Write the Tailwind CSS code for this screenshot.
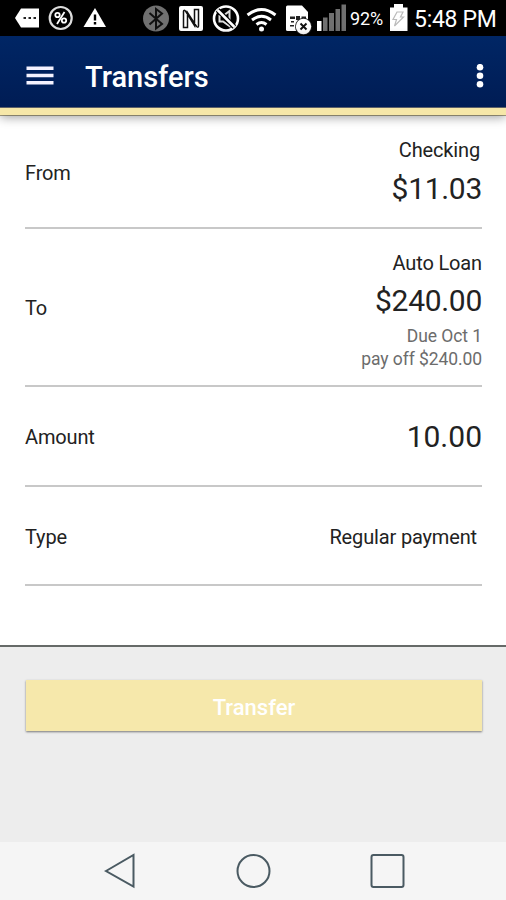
<!DOCTYPE html>
<html lang="en">
<head>
<meta charset="utf-8">
<title>Transfers</title>
<script src="https://cdn.jsdelivr.net/npm/@tailwindcss/browser@4"></script>
</head>
<body class="flex h-[900px] w-[506px] flex-col overflow-hidden bg-white font-['Roboto',sans-serif] text-[#222]">
  <!-- Status bar -->
  <div class="flex h-9 shrink-0 items-center bg-black text-white">
    <svg class="h-9 w-[348px] shrink-0" viewBox="0 0 348 36" fill="none">
      <path d="M15 18 21 8.500H39V27.500H21Z" fill="#fff"/>
      <path d="M23.500 17h2.500v2h-2.500zM28.500 17H31v2h-2.500zM33.500 17H36v2h-2.500z" fill="#222"/>
      <circle cx="60.700" cy="18" r="11" stroke="#ddd" stroke-width="2.200"/>
      <g stroke="#fff" stroke-width="1.800"><circle cx="57.500" cy="15" r="2.200"/><circle cx="64" cy="20.500" r="2.200"/><path d="M64.500 12 57 24"/></g>
      <path d="M95 8 106 27H83.500Z" fill="#fff"/>
      <path d="M95 14.500v6M95 22v2.500" stroke="#000" stroke-width="2.400"/>
      <circle cx="156" cy="18.500" r="13" fill="#707070"/>
      <path d="M149.500 13 162 24 156 28.500V9L162 13.500 149.500 24.500" stroke="#101010" stroke-width="2"/>
      <rect x="179" y="6" width="24" height="25" rx="2" fill="#fff"/>
      <path d="M187.500 27.500H183.500V11.500Q183.500 9.500 185.500 11L194.500 25.500V9.500H198.500V26Q198.500 28 196.500 26.500L187.500 12.500Z" stroke="#111" stroke-width="1.500"/>
      <circle cx="226" cy="18.500" r="12" stroke="#fff" stroke-width="2.600"/>
      <path d="M219.500 16H223L229.500 11V26L223 21.500H219.500Z" stroke="#ddd" stroke-width="2"/>
      <path d="M217.500 10 234.500 27" stroke="#000" stroke-width="5"/>
      <path d="M217.500 10 234.500 27" stroke="#fff" stroke-width="2.500"/>
      <g stroke="#fff" stroke-width="2.900"><path d="M247.500 15Q261.500 4 275.500 15M252 20Q261.500 12.500 271 20M256.500 24.500Q261.500 20.500 266.500 24.500"/></g>
      <circle cx="261.500" cy="29" r="2.500" fill="#fff"/>
      <path d="M286 7Q286 5.500 287.500 5.500H302L308 12V31H287.500Q286 31 286 29.500Z" fill="#fff"/>
      <path d="M290 16.500h5v2.500h-5zM296 16h4v4h-4zM301.500 16.500h4.500v2.500h-4.500zM291 21h3v1.500h-3zM290 25h4v1.500h-4z" fill="#222"/>
      <circle cx="303.500" cy="26.500" r="8.500" fill="#222"/><circle cx="303.500" cy="26.500" r="7.700" fill="#fff"/>
      <path d="m300.500 23.500 6 6m0-6-6 6" stroke="#111" stroke-width="1.900"/>
      <path d="M317 21h4.500v10H317z" fill="#fff"/>
      <path d="M323 17.500h4.500V31H323zM329 13h5v18h-5zM335.500 9h4.500v22h-4.500zM341.500 4.500h4.500V31h-4.500z" fill="#707070"/>
    </svg>
    <span class="ml-[2px] w-[35px] pt-px text-[18px] leading-9 tracking-[-0.1px] whitespace-nowrap">92%</span>
    <svg class="ml-[4px] h-9 w-[19px] shrink-0" viewBox="389 0 19 36" fill="none">
      <path d="M394 4h9v3.500h4.500V31H390V7.500h4Z" fill="#fff"/>
      <path d="M397 12h6l-2.500 5h3L394.500 26l2-6.500H393Z" stroke="#bbb" stroke-width="1.200"/>
    </svg>
    <span class="ml-[6px] pt-[3px] text-[23px] leading-[34px] tracking-[-0.3px] whitespace-nowrap">5:48 PM</span>
  </div>

  <!-- App bar -->
  <header class="z-10 flex h-[79px] shrink-0 items-center border-b-[7px] border-[#f6e7a8] bg-linear-to-b from-[#002665] to-[#001c54] pt-2 pr-[21px] pl-[26px] text-white shadow-[0_2px_10px_rgba(0,0,0,0.4),inset_0_-1px_0_#5d6068,0_1px_0_#b0a98d]">
    <svg class="h-5 w-[28px]" viewBox="0 0 28 20" fill="#f4f2ff"><path d="M.5.500h27v3.500H.5zM.5 7.800h27v3.500H.5zM.5 15h27v3.500H.5z"/></svg>
    <h1 class="ml-[31px] pt-[2px] text-[29px] leading-9 font-medium">Transfers</h1>
    <svg class="ml-auto h-6 w-[10px]" viewBox="0 0 10 24" fill="#fff"><circle cx="5" cy="3.200" r="3.300"/><circle cx="5" cy="11.700" r="3.300"/><circle cx="5" cy="20.200" r="3.300"/></svg>
  </header>

  <!-- Transfer details -->
  <main class="h-[530px] shrink-0 pr-6 pl-[25px] text-[20px] leading-6 tracking-[-0.15px]">
    <section class="flex h-[114px] items-center justify-between border-b-2 border-[#c8c8c8]">
      <span class="pt-[3px]">From</span>
      <div class="pt-[2px] text-right">
        <div class="pr-[2px]">Checking</div>
        <div class="mt-[10px] text-[30px] leading-[34px] tracking-[-0.3px]">$11.03</div>
      </div>
    </section>
    <section class="flex h-[158px] items-center justify-between border-b-2 border-[#c8c8c8]">
      <span class="pt-[2px]">To</span>
      <div class="pt-[8px] text-right">
        <div>Auto Loan</div>
        <div class="mt-[9px] text-[30px] leading-[34px] tracking-[-0.3px]">$240.00</div>
        <div class="mt-[7px] text-[17.500px] leading-[23px] tracking-[-0.08px] text-[#6c6c6c]">Due Oct 1<br>pay off $240.00</div>
      </div>
    </section>
    <section class="flex h-[100px] items-center justify-between border-b-2 border-[#c8c8c8]">
      <span class="pt-px">Amount</span>
      <span class="pt-[2px] text-[30px] tracking-normal">10.00</span>
    </section>
    <section class="flex h-[99px] items-center justify-between border-b-2 border-[#c8c8c8]">
      <span class="pt-[2px]">Type</span>
      <span class="pt-[2px] pr-[5px]">Regular payment</span>
    </section>
  </main>

  <!-- Action area -->
  <div class="h-[197px] shrink-0 border-t-2 border-[#666a68] bg-[#ededed] px-[26px] pt-[33px]">
    <button class="block h-[51px] w-[456px] bg-[#f6e8ab] pt-[4px] text-center text-[22px] font-medium text-white shadow-[0_1px_2px_rgba(0,0,0,0.5)]">Transfer</button>
  </div>

  <!-- Navigation bar -->
  <nav class="flex h-[58px] shrink-0 items-center bg-[#f5f5f5]">
    <svg class="h-[58px] w-[506px]" viewBox="0 842 506 58" fill="none" stroke="#4a5a62" stroke-width="2">
      <path d="M106 871 133.500 855V886.500Z"/>
      <circle cx="253.500" cy="871" r="16"/>
      <rect x="371.500" y="855" width="32" height="32" rx="2"/>
    </svg>
  </nav>
</body>
</html>
